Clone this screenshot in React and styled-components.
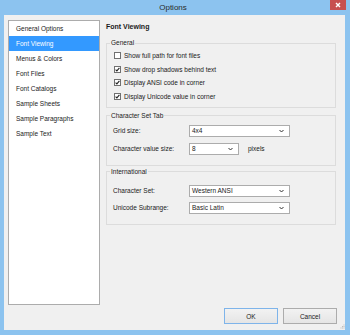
import React from "react";
import styled, { createGlobalStyle } from "styled-components";

const GlobalStyle = createGlobalStyle`
  html, body {
    margin: 0;
    padding: 0;
    background: #8cc3ef;
  }
  body {
    font-family: "Liberation Sans", Arial, sans-serif;
  }
`;

const Window = styled.div`
  width: 350px;
  height: 335px;
  background: #8cc3ef;
  display: flex;
  flex-direction: column;
  box-sizing: border-box;
  overflow: hidden;
`;

const TitleBar = styled.div`
  height: 15px;
  display: grid;
  grid-template-columns: 1fr auto 1fr;
  align-items: start;
  padding-right: 4px;
`;

const Title = styled.div`
  grid-column: 2;
  font-size: 8px;
  line-height: 15px;
  color: #2b2b2b;
`;

const CloseButton = styled.div`
  grid-column: 3;
  justify-self: end;
  width: 16px;
  height: 10px;
  background: #c75050;
  display: flex;
  align-items: center;
  justify-content: center;
`;

const Client = styled.div`
  flex: 1;
  margin: 0 5px 5px 4px;
  background: #f0f0f0;
  display: flex;
  flex-direction: column;
  padding: 5px 9px 6px 4px;
  box-sizing: border-box;
  position: relative;
`;

const Body = styled.div`
  display: flex;
  gap: 6px;
  height: 285px;
`;

const Sidebar = styled.div`
  width: 92px;
  box-sizing: border-box;
  background: #ffffff;
  border: 1px solid #acacac;
  display: flex;
  flex-direction: column;
`;

const NavItem = styled.div`
  height: 15px;
  line-height: 15px;
  padding-left: 7px;
  font-size: 6.5px;
  color: ${(p) => (p.$active ? "#ffffff" : "#1a1a1a")};
  background: ${(p) => (p.$active ? "#3399ff" : "transparent")};
  white-space: nowrap;
`;

const Content = styled.div`
  flex: 1;
  display: flex;
  flex-direction: column;
`;

const Heading = styled.div`
  font-size: 7px;
  font-weight: bold;
  line-height: 10px;
  padding-top: 2px;
  color: #1a1a1a;
  margin-bottom: ${(p) => p.$gap}px;
`;

const Group = styled.fieldset`
  margin: 0 0 ${(p) => p.$after}px 0;
  padding: 0;
  border: 1px solid #dcdcdc;
  min-width: 0;
`;

const Legend = styled.legend`
  margin-left: 3px;
  padding: 0 1px;
  font-size: 6.5px;
  line-height: 8px;
  color: #1a1a1a;
`;

const Rows = styled.div`
  display: flex;
  flex-direction: column;
  padding: ${(p) => p.$pad};
`;

const CheckRow = styled.div`
  height: 13.4px;
  display: flex;
  align-items: center;
  gap: 3px;
  font-size: 6.5px;
  color: #1a1a1a;
`;

const Box = styled.div`
  width: 7px;
  height: 7px;
  box-sizing: border-box;
  border: 1px solid #707070;
  background: #ffffff;
  display: flex;
  align-items: center;
  justify-content: center;
`;

const FieldRow = styled.div`
  height: ${(p) => p.$h}px;
  display: flex;
  align-items: center;
  font-size: 6.5px;
  color: #1a1a1a;
`;

const FieldLabel = styled.div`
  width: 76px;
`;

const Combo = styled.div`
  width: ${(p) => p.$w}px;
  height: 12px;
  box-sizing: border-box;
  border: 1px solid #acacac;
  background: #ffffff;
  display: flex;
  align-items: center;
  justify-content: space-between;
  padding: 0 5px 0 2px;
`;

const Unit = styled.div`
  margin-left: 9px;
`;

const Footer = styled.div`
  display: flex;
  justify-content: flex-end;
  gap: 5px;
  margin-top: 3px;
  margin-right: -1px;
`;

const Button = styled.div`
  width: 54px;
  height: 16px;
  box-sizing: border-box;
  border: 1px solid ${(p) => (p.$default ? "#7eb4ea" : "#acacac")};
  background: linear-gradient(#f2f2f2, #e5e5e5);
  font-size: 6.5px;
  color: #1a1a1a;
  display: flex;
  align-items: center;
  justify-content: center;
`;

const Grip = styled.svg`
  position: absolute;
  right: 0;
  bottom: 1px;
`;

const Chevron = () => (
  <svg width="5" height="4" viewBox="0 0 5 4">
    <path d="M0.5 1 L2.5 3 L4.5 1" fill="none" stroke="#333" strokeWidth="1" />
  </svg>
);

const Check = () => (
  <svg width="5" height="5" viewBox="0 0 5 5">
    <path d="M0.6 2.6 L1.9 3.9 L4.4 0.9" fill="none" stroke="#222" strokeWidth="1.1" />
  </svg>
);

const navItems = [
  "General Options",
  "Font Viewing",
  "Menus & Colors",
  "Font Files",
  "Font Catalogs",
  "Sample Sheets",
  "Sample Paragraphs",
  "Sample Text",
];

const checks = [
  { label: "Show full path for font files", on: false },
  { label: "Show drop shadows behind text", on: true },
  { label: "Display ANSI code in corner", on: true },
  { label: "Display Unicode value in corner", on: true },
];

function App() {
  return (
    <Window>
      <GlobalStyle />
      <TitleBar>
        <Title>Options</Title>
        <CloseButton>
          <svg width="6" height="6" viewBox="0 0 6 6">
            <path d="M1 1 L5 5 M5 1 L1 5" stroke="#fff" strokeWidth="1.4" />
          </svg>
        </CloseButton>
      </TitleBar>
      <Client>
        <Body>
          <Sidebar>
            {navItems.map((item) => (
              <NavItem key={item} $active={item === "Font Viewing"}>
                {item}
              </NavItem>
            ))}
          </Sidebar>
          <Content>
            <Heading $gap={7}>Font Viewing</Heading>
            <Group $after={4}>
              <Legend>General</Legend>
              <Rows $pad="2.3px 0 4px 7px">
                {checks.map((c) => (
                  <CheckRow key={c.label}>
                    <Box>{c.on && <Check />}</Box>
                    {c.label}
                  </CheckRow>
                ))}
              </Rows>
            </Group>
            <Group $after={2}>
              <Legend>Character Set Tab</Legend>
              <Rows $pad="2px 0 7px 6px">
                <FieldRow $h={18}>
                  <FieldLabel>Grid size:</FieldLabel>
                  <Combo $w={101}>
                    4x4
                    <Chevron />
                  </Combo>
                </FieldRow>
                <FieldRow $h={18}>
                  <FieldLabel>Character value size:</FieldLabel>
                  <Combo $w={50}>
                    8
                    <Chevron />
                  </Combo>
                  <Unit>pixels</Unit>
                </FieldRow>
              </Rows>
            </Group>
            <Group $after={0}>
              <Legend>International</Legend>
              <Rows $pad="6.5px 0 8px 6px">
                <FieldRow $h={17}>
                  <FieldLabel>Character Set:</FieldLabel>
                  <Combo $w={101}>
                    Western ANSI
                    <Chevron />
                  </Combo>
                </FieldRow>
                <FieldRow $h={17}>
                  <FieldLabel>Unicode Subrange:</FieldLabel>
                  <Combo $w={101}>
                    Basic Latin
                    <Chevron />
                  </Combo>
                </FieldRow>
              </Rows>
            </Group>
          </Content>
        </Body>
        <Footer>
          <Button $default>OK</Button>
          <Button>Cancel</Button>
        </Footer>
        <Grip width="5" height="5" viewBox="0 0 5 5">
          <rect x="3.5" y="0.5" width="1" height="1" fill="#bdbdbd" />
          <rect x="2" y="2" width="1" height="1" fill="#bdbdbd" />
          <rect x="3.5" y="2" width="1" height="1" fill="#bdbdbd" />
          <rect x="0.5" y="3.5" width="1" height="1" fill="#bdbdbd" />
          <rect x="2" y="3.5" width="1" height="1" fill="#bdbdbd" />
          <rect x="3.5" y="3.5" width="1" height="1" fill="#bdbdbd" />
        </Grip>
      </Client>
    </Window>
  );
}

export default App;
